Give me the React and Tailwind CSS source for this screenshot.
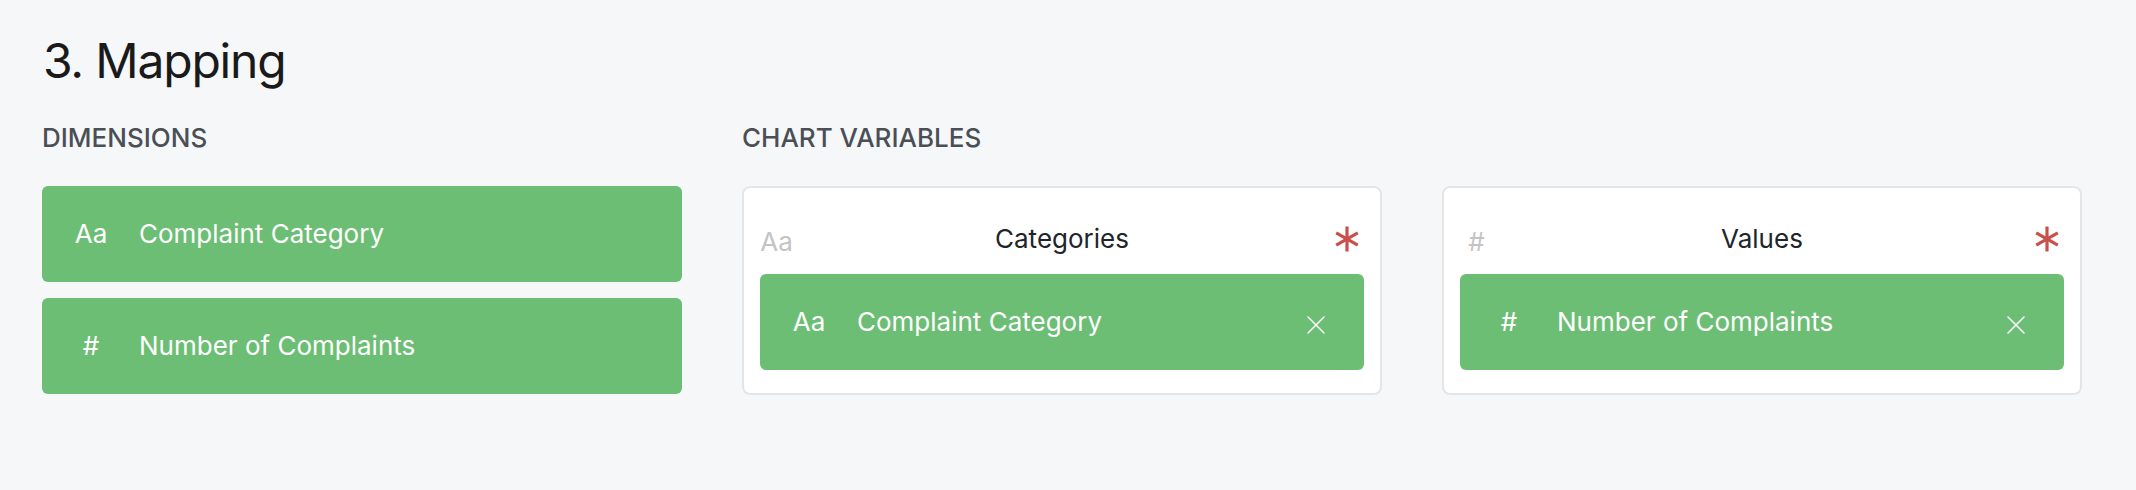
import { X } from 'lucide-react';

const font = { fontFamily: 'Inter, "Noto Sans", sans-serif' };

function Asterisk() {
  return (
    <svg width="24" height="26" viewBox="0 0 24 26" className="shrink-0">
      <g stroke="#c9504a" strokeWidth="3.2" strokeLinecap="butt">
        <line x1="12" y1="0.5" x2="12" y2="25.5" />
        <line x1="1.2" y1="6.8" x2="22.8" y2="19.2" />
        <line x1="1.2" y1="19.2" x2="22.8" y2="6.8" />
      </g>
    </svg>
  );
}

function DimensionCard({ icon, label, removable }) {
  return (
    <div className="h-[96px] rounded-[6px] bg-[#6cbe74] text-white flex items-center text-[26px] leading-[30px]">
      <span className="ml-[25px] w-[48px] text-center shrink-0">{icon}</span>
      <span className="ml-[24px] flex-1">{label}</span>
      {removable && (
        <X className="mr-[32px] w-[32px] h-[32px] mt-[6px]" strokeWidth={1.1} />
      )}
    </div>
  );
}

function VariableBox({ icon, title, children }) {
  return (
    <div className="border-2 border-[#e4e5e7] rounded-[8px] bg-white px-[16px] pt-[16px] pb-[23px]">
      <div className="h-[70px] grid grid-cols-[1fr_auto_1fr] items-center">
        <span className="w-[33px] text-center text-[26px] leading-[30px] text-[#c4c4c6] pt-[6px]">{icon}</span>
        <span className="text-[26px] leading-[30px] text-[#212529]">{title}</span>
        <div className="flex justify-end pr-[5px]">
          <Asterisk />
        </div>
      </div>
      {children}
    </div>
  );
}

export default function App() {
  return (
    <div className="min-h-screen bg-[#f6f7f9]" style={font}>
      <div className="pl-[42px] pr-[54px] pt-[32px]">
        <h2 className="text-[48px] leading-[58px] tracking-[-0.025em] text-[#1a1a1a] ml-[1px]">3. Mapping</h2>

        <div className="flex gap-x-[60px] mt-[33px]">
          <section className="w-[640px] shrink-0">
            <h3 className="text-[26px] leading-[30px] font-medium uppercase text-[#4a4f56]">Dimensions</h3>
            <div className="mt-[33px] flex flex-col gap-[16px]">
              <DimensionCard icon="Aa" label="Complaint Category" />
              <DimensionCard icon="#" label="Number of Complaints" />
            </div>
          </section>

          <section className="flex-1">
            <h3 className="text-[26px] leading-[30px] font-medium uppercase text-[#4a4f56]">Chart Variables</h3>
            <div className="mt-[33px] grid grid-cols-2 gap-x-[60px]">
              <VariableBox icon="Aa" title="Categories">
                <DimensionCard icon="Aa" label="Complaint Category" removable />
              </VariableBox>
              <VariableBox icon="#" title="Values">
                <DimensionCard icon="#" label="Number of Complaints" removable />
              </VariableBox>
            </div>
          </section>
        </div>
      </div>
    </div>
  );
}
